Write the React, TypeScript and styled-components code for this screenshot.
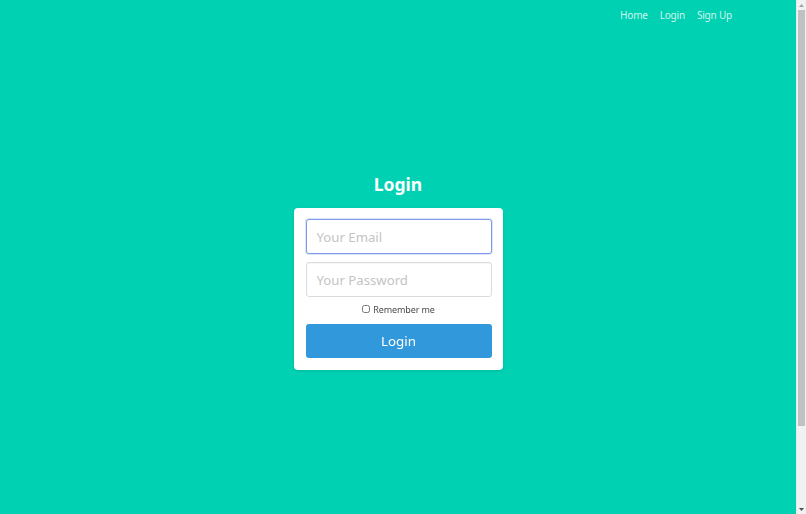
import React from 'react';
import styled, { createGlobalStyle } from 'styled-components';

const GlobalStyle = createGlobalStyle`
  html, body {
    margin: 0;
    padding: 0;
    background: #00d1b2;
  }
  body {
    font-family: "Segoe UI", "Noto Sans", sans-serif;
    overflow: hidden;
  }
  * {
    box-sizing: border-box;
  }
`;

const Page = styled.div`
  display: flex;
  height: 100vh;
  background: #00d1b2;
`;

const Main = styled.main`
  flex: 1;
  display: flex;
  flex-direction: column;
  min-width: 0;
`;

/* window scrollbar: up arrow, track with thumb, down arrow */
const ScrollBar = styled.aside`
  display: flex;
  flex-direction: column;
  align-items: center;
  width: 10px;
  background: #f1f1f1;
  border-left: 1px solid #e9e9e9;
`;

const Arrow = styled.div<{ $down?: boolean }>`
  display: flex;
  justify-content: center;
  align-items: center;
  height: 10px;
  width: 100%;
  svg {
    fill: ${p => (p.$down ? '#505050' : '#a3a3a3')};
  }
`;

const Track = styled.div`
  flex: 1;
  width: 100%;
  display: flex;
  justify-content: center;
`;

const Thumb = styled.div`
  width: 7px;
  height: 416px;
  background: #c1c1c1;
`;

const Navbar = styled.nav`
  display: flex;
  justify-content: flex-end;
  align-items: center;
  height: 30px;
  padding-right: 64px;
`;

const NavItem = styled.a`
  font-size: 10px;
  letter-spacing: -0.2px;
  color: rgba(255, 255, 255, 0.82);
  text-decoration: none;
  margin-left: 12px;
`;

const Hero = styled.section`
  display: flex;
  flex-direction: column;
  align-items: center;
  padding-top: 141px;
`;

const Title = styled.h1`
  margin: 0 0 11px;
  font-size: 17.5px;
  font-weight: 700;
  color: #ffffff;
  line-height: 26px;
`;

const Box = styled.form`
  display: flex;
  flex-direction: column;
  width: 209px;
  padding: 11px 11px 12px 12px;
  background: #ffffff;
  border-radius: 4px;
  box-shadow: 0 1px 3px rgba(10, 10, 10, 0.1);
`;

const Input = styled.input<{ $focused?: boolean }>`
  width: 100%;
  height: 35px;
  margin-bottom: ${p => (p.$focused ? '8px' : '0')};
  padding: 0 10px;
  font-family: inherit;
  font-size: 13.2px;
  color: #363636;
  border: 1px solid ${p => (p.$focused ? '#7f98e8' : '#dbdbdb')};
  border-radius: 3px;
  box-shadow: ${p =>
    p.$focused ? '0 0 0 1px rgba(50, 115, 220, 0.18)' : 'inset 0 1px 1px rgba(10, 10, 10, 0.04)'};
  outline: none;
  caret-color: #363636;
  &::placeholder {
    color: #c4c4c4;
  }
`;

const CheckRow = styled.label`
  display: flex;
  justify-content: center;
  align-items: center;
  gap: 2px;
  height: 16px;
  margin: 4px 0 7px;
  font-size: 9px;
  letter-spacing: -0.1px;
  color: #4a4a4a;
`;

const Check = styled.input`
  width: 8px;
  height: 8px;
  margin: 0 1px 0 0;
`;

const Button = styled.button`
  height: 34px;
  width: 100%;
  border: none;
  border-radius: 3px;
  background: #3298dc;
  color: #ffffff;
  font-family: inherit;
  font-size: 13.4px;
`;

const Triangle = ({ down }: { down?: boolean }) => (
  <svg width="5" height="3" viewBox="0 0 5 3">
    <path d={down ? 'M0 0h5L2.5 3z' : 'M2.5 0L5 3H0z'} />
  </svg>
);

export default function App() {
  return (
    <Page>
      <GlobalStyle />
      <Main>
        <Navbar>
          <NavItem href="#">Home</NavItem>
          <NavItem href="#">Login</NavItem>
          <NavItem href="#">Sign Up</NavItem>
        </Navbar>
        <Hero>
          <Title>Login</Title>
          <Box onSubmit={e => e.preventDefault()}>
            <Input type="email" placeholder="Your Email" $focused autoFocus />
            <Input type="password" placeholder="Your Password" />
            <CheckRow>
              <Check type="checkbox" />
              Remember me
            </CheckRow>
            <Button type="submit">Login</Button>
          </Box>
        </Hero>
      </Main>
      <ScrollBar>
        <Arrow>
          <Triangle />
        </Arrow>
        <Track>
          <Thumb />
        </Track>
        <Arrow $down>
          <Triangle down />
        </Arrow>
      </ScrollBar>
    </Page>
  );
}
